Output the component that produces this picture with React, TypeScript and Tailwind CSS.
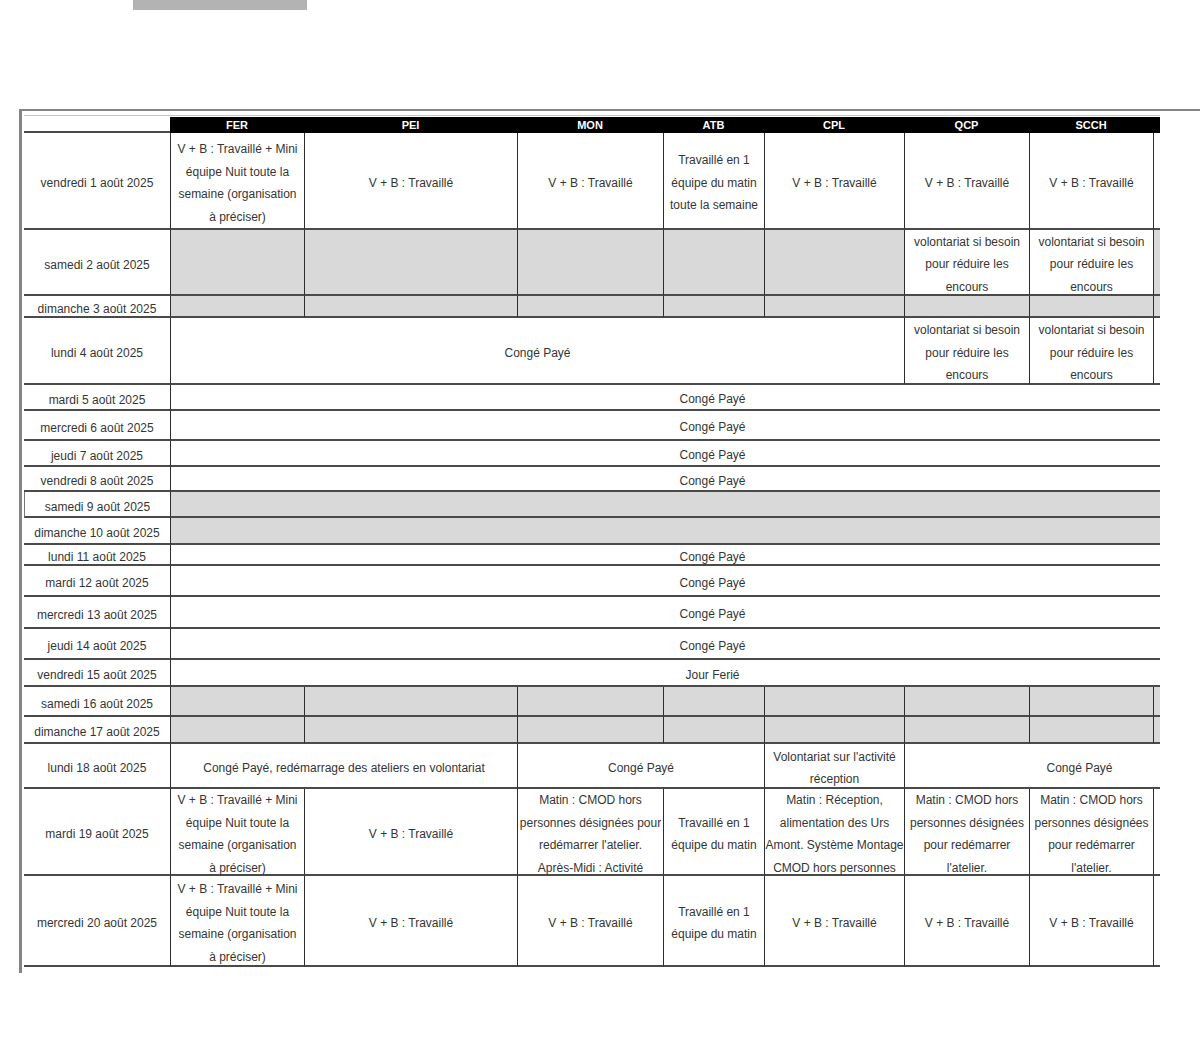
import React from 'react';

type Cell = {
  t?: string[];
  span?: 1 | 2 | 3 | 5 | 8;
  gray?: boolean;
  shift?: boolean;
};

type Row = { date: string; cells: Cell[]; markL?: boolean };

const SPAN: Record<number, string> = {
  1: '',
  2: 'col-span-2',
  3: 'col-span-3',
  5: 'col-span-5',
  8: 'col-span-8',
};

const HEADERS = ['FER', 'PEI', 'MON', 'ATB', 'CPL', 'QCP', 'SCCH', ''];

const VB = ['V + B : Travaillé'];
const FER = ['V + B : Travaillé + Mini', 'équipe Nuit toute la', 'semaine (organisation', 'à préciser)'];
const VOL = ['volontariat si besoin', 'pour réduire les', 'encours'];
const CP = ['Congé Payé'];
const ATB2 = ['Travaillé en 1', 'équipe du matin'];
const CMOD = ['Matin : CMOD hors', 'personnes désignées', 'pour redémarrer', "l'atelier."];

const g = (): Cell => ({ gray: true });
const wide = (t: string[]): Cell => ({ t, span: 8, shift: true });

// row heights live in the grid-rows class below
const ROWS: Row[] = [
  {
    date: 'vendredi 1 août 2025',
    cells: [
      { t: FER },
      { t: VB },
      { t: VB },
      { t: ['Travaillé en 1', 'équipe du matin', 'toute la semaine'] },
      { t: VB },
      { t: VB },
      { t: VB },
      {},
    ],
  },
  { date: 'samedi 2 août 2025', cells: [g(), g(), g(), g(), g(), { t: VOL }, { t: VOL }, g()] },
  { date: 'dimanche 3 août 2025', cells: [g(), g(), g(), g(), g(), g(), g(), g()] },
  { date: 'lundi 4 août 2025', cells: [{ t: CP, span: 5 }, { t: VOL }, { t: VOL }, {}] },
  { date: 'mardi 5 août 2025', cells: [wide(CP)] },
  { date: 'mercredi 6 août 2025', cells: [wide(CP)] },
  { date: 'jeudi 7 août 2025', cells: [wide(CP)] },
  { date: 'vendredi 8 août 2025', cells: [wide(CP)] },
  { date: 'samedi 9 août 2025', cells: [{ gray: true, span: 8 }], markL: true },
  { date: 'dimanche 10 août 2025', cells: [{ gray: true, span: 8 }] },
  { date: 'lundi 11 août 2025', cells: [wide(CP)] },
  { date: 'mardi 12 août 2025', cells: [wide(CP)] },
  { date: 'mercredi 13 août 2025', cells: [wide(CP)] },
  { date: 'jeudi 14 août 2025', cells: [wide(CP)] },
  { date: 'vendredi 15 août 2025', cells: [wide(['Jour Ferié'])] },
  { date: 'samedi 16 août 2025', cells: [g(), g(), g(), g(), g(), g(), g(), g()] },
  { date: 'dimanche 17 août 2025', cells: [g(), g(), g(), g(), g(), g(), g(), g()] },
  {
    date: 'lundi 18 août 2025',
    cells: [
      { t: ['Congé Payé, redémarrage des ateliers en volontariat'], span: 2 },
      { t: CP, span: 2 },
      { t: ["Volontariat sur l'activité", 'réception'] },
      { t: CP, span: 3, shift: true },
    ],
  },
  {
    date: 'mardi 19 août 2025',
    cells: [
      { t: FER },
      { t: VB },
      { t: ['Matin : CMOD hors', 'personnes désignées pour', "redémarrer l'atelier.", 'Après-Midi : Activité'] },
      { t: ATB2 },
      { t: ['Matin : Réception,', 'alimentation des Urs', 'Amont. Système Montage', 'CMOD hors personnes'] },
      { t: CMOD },
      { t: CMOD },
      {},
    ],
  },
  {
    date: 'mercredi 20 août 2025',
    cells: [{ t: FER }, { t: VB }, { t: VB }, { t: ATB2 }, { t: VB }, { t: VB }, { t: VB }, {}],
  },
];

function Lines({ t }: { t?: string[] }) {
  if (!t) return null;
  return (
    <div className="text-center leading-[22.5px]">
      {t.map((line, i) => (
        <div key={i} className="whitespace-nowrap">
          {line}
        </div>
      ))}
    </div>
  );
}

function DataCell({ c }: { c: Cell }) {
  return (
    <div
      className={[
        'flex min-h-0 items-center justify-center border-b-2 border-l border-b-[#4a4a4a] border-l-[#2e2e2e] pt-[5px]',
        c.gray ? 'bg-[#d9d9d9]' : 'bg-white',
        c.shift ? 'pl-[94px]' : '',
        SPAN[c.span ?? 1],
      ].join(' ')}
    >
      <Lines t={c.t} />
    </div>
  );
}

export default function App() {
  return (
    <div className="min-h-screen bg-white font-['Liberation_Sans',Arial,sans-serif] text-[12px] text-[#353535]">
      <div className="ml-[133px] h-[10px] w-[174px] bg-[#b3b3b3]" />

      <div className="ml-[19px] mt-[99px] border-l-[3px] border-t-2 border-[#858585] pb-[6px] pl-[2px] pt-[4px]">
        <div className="w-[1136px]">
          <div className="h-px bg-[#c4c4c4]" />
          <div className="mt-px grid grid-cols-[146px_134px_213px_146px_101px_140px_125px_124px_7px] grid-rows-[16px_97px_66px_22px_67px_26px_30px_26px_25px_26px_27px_21px_31px_32px_31px_27px_30px_27px_45px_87px_91px]">
            {/* header */}
            <div className="border-b-2 border-b-[#4a4a4a] bg-white" />
            {HEADERS.map((h, i) => (
              <div
                key={i}
                className="flex items-center justify-center bg-black text-[11px] font-bold leading-none text-white"
              >
                {h}
              </div>
            ))}

            {ROWS.map((r) => (
              <React.Fragment key={r.date}>
                <div
                  className={[
                    'flex min-h-0 items-center justify-center whitespace-nowrap border-b-2 border-b-[#4a4a4a] bg-white pt-[5px]',
                    r.markL ? 'border-l border-l-[#777]' : '',
                  ].join(' ')}
                >
                  {r.date}
                </div>
                {r.cells.map((c, i) => (
                  <DataCell key={i} c={c} />
                ))}
              </React.Fragment>
            ))}
          </div>
        </div>
      </div>
    </div>
  );
}
